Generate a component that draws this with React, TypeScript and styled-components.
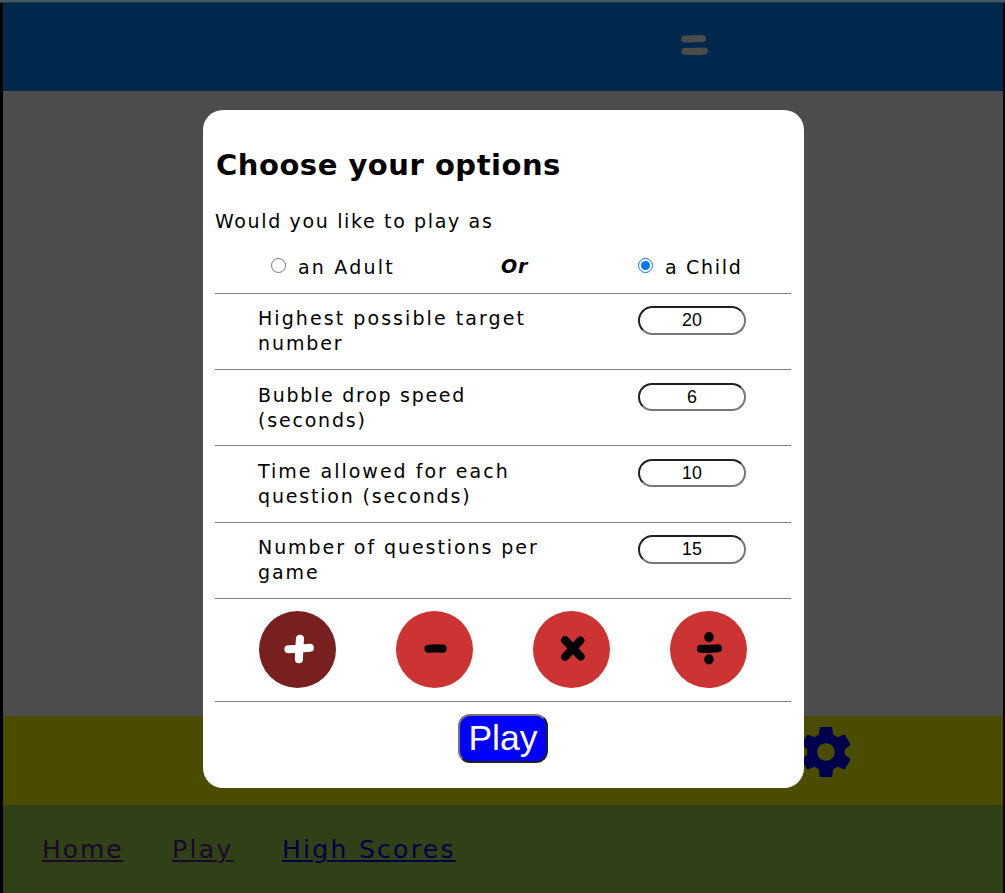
import React from 'react';
import styled, { createGlobalStyle } from 'styled-components';

const GlobalStyle = createGlobalStyle`
  * { box-sizing: border-box; }
  body {
    margin: 0;
    background: #000;
    font-family: "DejaVu Sans", sans-serif;
    overflow: hidden;
  }
`;

const Page = styled.div`
  display: flex;
  flex-direction: column;
  height: 893px;
  width: 1005px;
`;

const TopEdge = styled.div`
  height: 3px;
  flex: none;
  background: #455963;
  border-bottom: 1px solid #243840;
`;

const Shell = styled.div`
  flex: 1;
  display: flex;
  flex-direction: column;
  margin: 0 2px 0 3px;
`;

const Header = styled.header`
  height: 88px;
  background: #00284c;
  padding: 31px 0 0 677px;
`;

const Stage = styled.main`
  flex: 1;
  background: #4c4c4c;
`;

const ControlBar = styled.div`
  height: 89px;
  background: #4c4c00;
  padding: 6px 0 0 793px;
`;

const Footer = styled.footer`
  height: 88px;
  background: #314117;
  display: flex;
  padding: 28px 0 0 39px;
`;

const NavLink = styled.a<{ $width: number; $color: string; $tracking: number }>`
  width: ${(p) => p.$width}px;
  margin-right: 49px;
  color: ${(p) => p.$color};
  font-size: 25px;
  line-height: 34px;
  letter-spacing: ${(p) => p.$tracking}px;
  white-space: nowrap;
  text-decoration: underline;
  text-decoration-thickness: 2px;
  text-underline-offset: 2px;
`;

const Overlay = styled.div`
  position: fixed;
  top: 110px;
  left: 203px;
`;

const Dialog = styled.section`
  width: 601px;
  height: 678px;
  padding: 0 13px 0 12px;
  background: #fff;
  border-radius: 20px;
  color: #000;
`;

const Title = styled.h2`
  margin: 0;
  padding: 35px 0 0 1px;
  height: 93px;
  font-size: 29px;
  line-height: 40px;
  letter-spacing: 0.52px;
  white-space: nowrap;
`;

const Prompt = styled.p`
  margin: 0;
  height: 44px;
  padding-top: 6px;
  font-size: 19px;
  line-height: 25px;
  letter-spacing: 1.65px;
`;

const PlayerRow = styled.div`
  display: flex;
  height: 47px;
  padding: 8px 0 0 56px;
  border-bottom: 1px solid #808080;
`;

const PlayerChoice = styled.label<{ $width: number; $tracking: number }>`
  display: flex;
  width: ${(p) => p.$width}px;
  font-size: 19px;
  line-height: 25px;
  letter-spacing: ${(p) => p.$tracking}px;
  white-space: nowrap;
`;

const Radio = styled.input`
  width: 15px;
  height: 15px;
  margin: 3px 12px 0 0;
`;

const Or = styled.em`
  width: 137px;
  font-size: 19px;
  font-weight: bold;
  line-height: 23px;
  letter-spacing: 0.8px;
`;

const Setting = styled.label<{ $height: number; $top: number }>`
  display: flex;
  justify-content: space-between;
  height: ${(p) => p.$height}px;
  padding: ${(p) => p.$top}px 45px 0 43px;
  border-bottom: 1px solid #808080;
`;

const SettingName = styled.span`
  width: 300px;
  font-size: 19px;
  line-height: 25px;
`;

const Line = styled.span<{ $tracking: number }>`
  display: block;
  white-space: nowrap;
  letter-spacing: ${(p) => p.$tracking}px;
`;

const NumberField = styled.input<{ $height: number }>`
  width: 108px;
  height: ${(p) => p.$height}px;
  padding: 0;
  border: 2px inset #767676;
  border-radius: 15px;
  background: #fff;
  color: #000;
  text-align: center;
  font: 17.8px "Liberation Sans", sans-serif;
`;

const Operators = styled.div`
  display: flex;
  justify-content: space-between;
  height: 103px;
  padding: 12px 44px 0;
  border-bottom: 1px solid #808080;
`;

const OperatorButton = styled.button<{ $selected?: boolean }>`
  width: 77px;
  height: 77px;
  padding: 0;
  border: 0;
  border-radius: 50%;
  background: ${(p) => (p.$selected ? '#781f1f' : '#cc3333')};
  color: ${(p) => (p.$selected ? '#fff' : '#000')};

  svg { display: block; }
`;

const Actions = styled.div`
  display: flex;
  justify-content: center;
  padding-top: 12px;
`;

const PlayButton = styled.button`
  width: 90px;
  height: 49px;
  padding: 0;
  border: 2px outset #767676;
  border-radius: 12px;
  background: #00f;
  color: #fff;
  font: 35.6px/45px "Liberation Sans", sans-serif;
`;

type TrackedLine = [text: string, tracking: number];

const settings: { lines: TrackedLine[]; value: string; height: number; top: number; field: number }[] = [
  { lines: [['Highest possible target', 2.07], ['number', 1.9]], value: '20', height: 76, top: 12, field: 29 },
  { lines: [['Bubble drop speed', 1.72], ['(seconds)', 1.8]], value: '6', height: 76, top: 13, field: 28 },
  { lines: [['Time allowed for each', 2], ['question (seconds)', 1.82]], value: '10', height: 77, top: 13, field: 28 },
  { lines: [['Number of questions per', 1.93], ['game', 1.9]], value: '15', height: 76, top: 12, field: 29 },
];

const operators = [
  { label: 'add', selected: true, strokes: 'M41 27.8Q40 38 39.9 48.2M29.4 38.2Q39 38.2 50.9 36.8' },
  { label: 'subtract', strokes: 'M32.4 37.7Q38 37.2 46.6 37.6' },
  { label: 'multiply', strokes: 'M32.1 29.1L47.7 45.5M47.3 29.5L32.1 45.7' },
  { label: 'divide', strokes: 'M30.9 37.7Q39 38.2 48.1 37.2' },
];

const gearPath =
  'M19.43 12.98c.04-.32.07-.64.07-.98s-.03-.66-.07-.98l2.11-1.65c.19-.15.24-.42.12-.64l-2-3.46c-.12-.22-.39-.3-.61-.22l-2.49 1c-.52-.4-1.08-.73-1.69-.98l-.38-2.65C14.46 2.18 14.25 2 14 2h-4c-.25 0-.46.18-.49.42l-.38 2.65c-.61.25-1.17.59-1.69.98l-2.49-1c-.23-.09-.49 0-.61.22l-2 3.46c-.13.22-.07.49.12.64l2.11 1.65c-.04.32-.07.65-.07.98s.03.66.07.98l-2.11 1.65c-.19.15-.24.42-.12.64l2 3.46c.12.22.39.3.61.22l2.49-1c.52.4 1.08.73 1.69.98l.38 2.65c.03.24.24.42.49.42h4c.25 0 .46-.18.49-.42l.38-2.65c.61-.25 1.17-.59 1.69-.98l2.49 1c.23.09.49 0 .61-.22l2-3.46c.12-.22.07-.49-.12-.64l-2.11-1.65zM12 15.5c-1.93 0-3.5-1.57-3.5-3.5s1.57-3.5 3.5-3.5 3.5 1.57 3.5 3.5-1.57 3.5-3.5 3.5z';

export default function App() {
  return (
    <>
      <GlobalStyle />
      <Page>
        <TopEdge />
        <Shell>
          <Header>
            <svg width="30" height="22" viewBox="0 0 30 22" fill="none" stroke="#4c4c4c" strokeWidth="7" strokeLinecap="round">
              <path d="M4.7 5Q14 4.4 22.5 4.4M4.9 17.3Q14 18 24.4 17.1" />
            </svg>
          </Header>
          <Stage />
          <ControlBar>
            <svg width="60" height="60" viewBox="0 0 24 24" fill="#00004c">
              <path d={gearPath} />
            </svg>
          </ControlBar>
          <Footer>
            <NavLink href="#home" $width={81} $color="#190829" $tracking={1.9}>Home</NavLink>
            <NavLink href="#play" $width={61} $color="#190829" $tracking={2.4}>Play</NavLink>
            <NavLink href="#scores" $width={174} $color="#000047" $tracking={2.3}>High Scores</NavLink>
          </Footer>
        </Shell>
      </Page>
      <Overlay>
        <Dialog>
          <Title>Choose your options</Title>
          <Prompt>Would you like to play as</Prompt>
          <PlayerRow>
            <PlayerChoice $width={230} $tracking={2.2}>
              <Radio type="radio" name="player" />
              an Adult
            </PlayerChoice>
            <Or>Or</Or>
            <PlayerChoice $width={110} $tracking={1.7}>
              <Radio type="radio" name="player" defaultChecked />
              a Child
            </PlayerChoice>
          </PlayerRow>
          {settings.map((s) => (
            <Setting key={s.value} $height={s.height} $top={s.top}>
              <SettingName>
                {s.lines.map(([text, tracking]) => (
                  <Line key={text} $tracking={tracking}>{text}</Line>
                ))}
              </SettingName>
              <NumberField defaultValue={s.value} $height={s.field} />
            </Setting>
          ))}
          <Operators>
            {operators.map((op) => (
              <OperatorButton key={op.label} $selected={op.selected} aria-label={op.label}>
                <svg width="77" height="77" viewBox="0 0 77 77" fill="none" stroke="currentColor" strokeWidth="8.1" strokeLinecap="round">
                  <path d={op.strokes} />
                  {op.label === 'divide' && (
                    <g fill="currentColor" stroke="none">
                      <ellipse cx="39" cy="26.1" rx="4.8" ry="5.1" />
                      <ellipse cx="39" cy="48.3" rx="4.8" ry="5.1" />
                    </g>
                  )}
                </svg>
              </OperatorButton>
            ))}
          </Operators>
          <Actions>
            <PlayButton>Play</PlayButton>
          </Actions>
        </Dialog>
      </Overlay>
    </>
  );
}
